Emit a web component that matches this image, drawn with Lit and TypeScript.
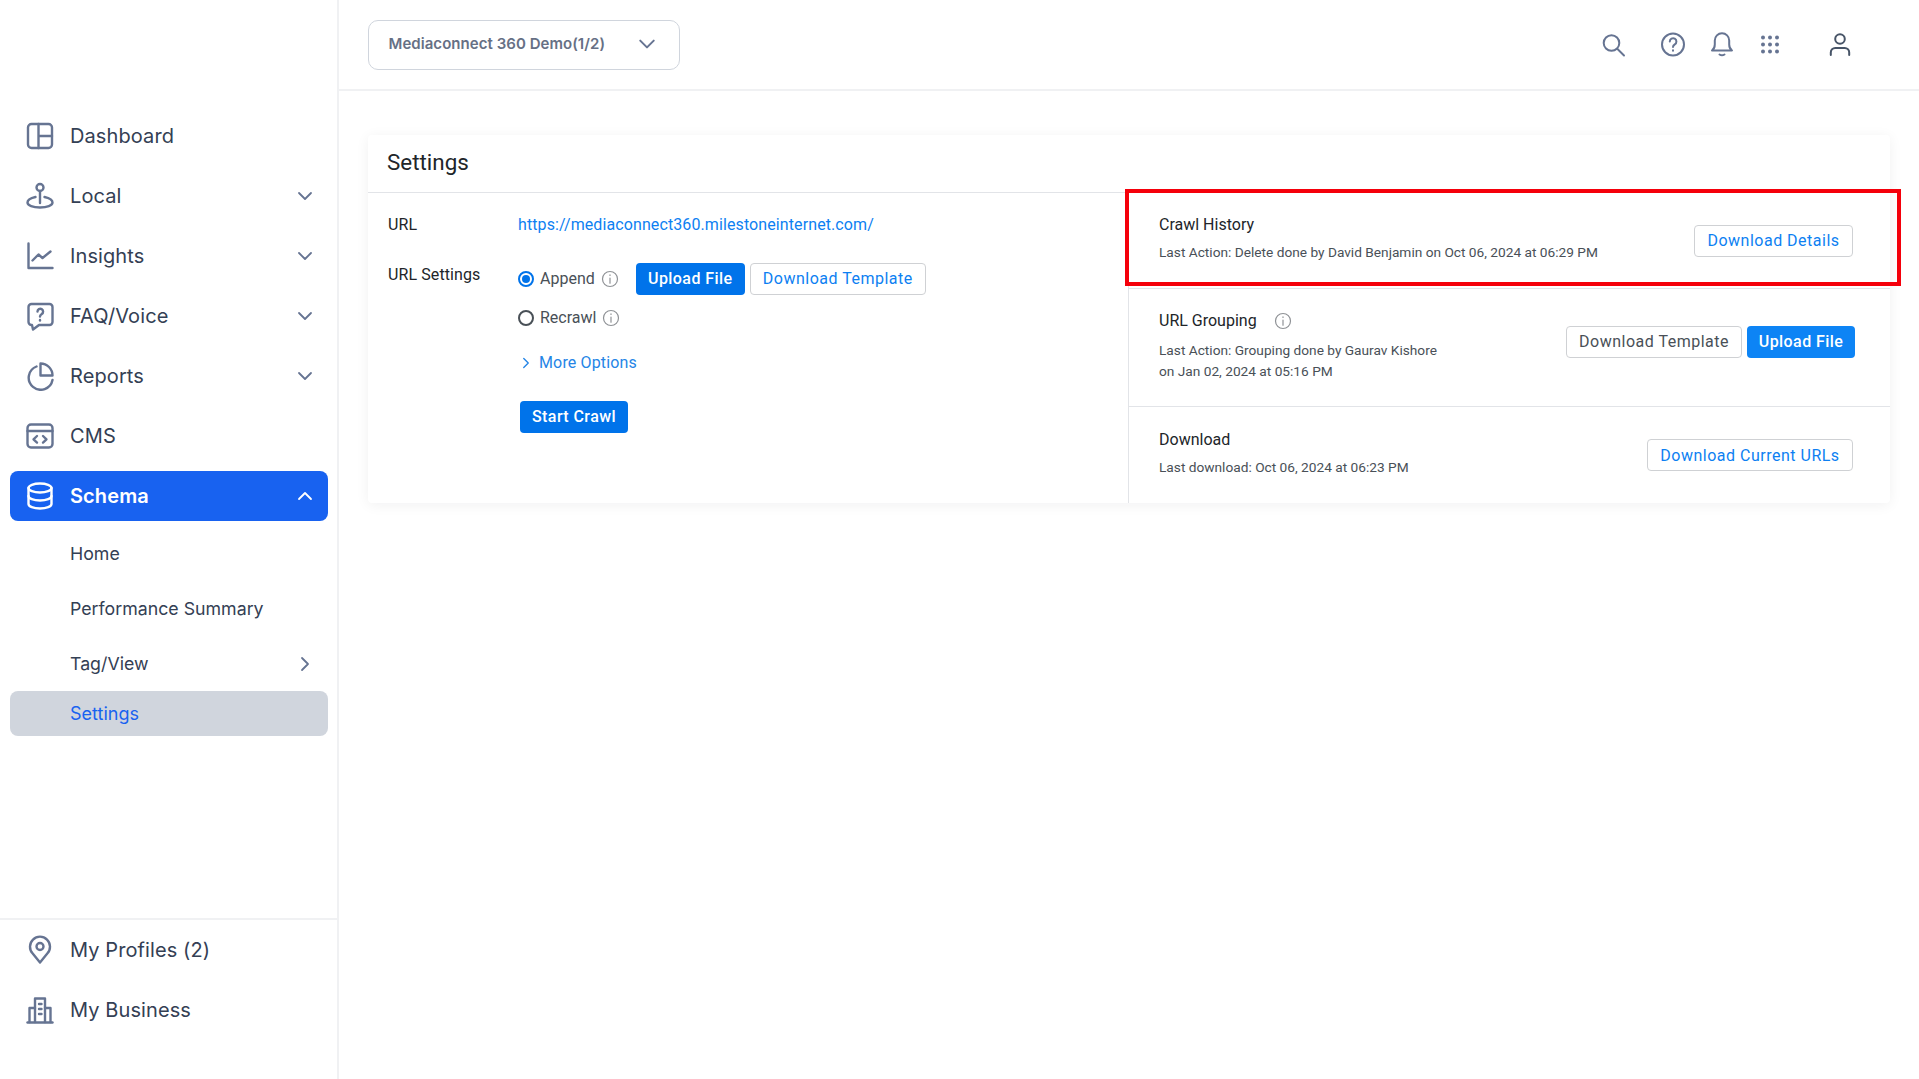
import { LitElement, html, css, svg } from 'lit';
import { customElement } from 'lit/decorators.js';

const icons: Record<string, unknown> = {
  dashboard: svg`<rect x="3" y="3" width="24" height="24" rx="3.5"/><path d="M13.5 3v24M13.5 15H27"/>`,
  local: svg`<circle cx="15" cy="6.500" r="3.500"/><path d="M15 10v12"/><path d="M10.500 16C6 17 2.500 18.800 2.500 21.500c0 3 5.500 5 12.500 5s12.500-2 12.500-5c0-2.700-3.500-4.500-8-5.500"/>`,
  insights: svg`<path d="M3.500 2.500V27H27.500"/><path d="M7.500 19.500l6-6 4 3.500 8-6.500"/>`,
  faq: svg`<path d="M6.500 3h18a3 3 0 0 1 3 3v15a3 3 0 0 1-3 3H14l-6 4.500-1-4.500h-.5a3 3 0 0 1-3-3V6a3 3 0 0 1 3-3z"/><path d="M12.500 10.500a2.800 2.800 0 1 1 4.300 2.400c-1.200.8-1.800 1.300-1.800 2.600"/><path d="M15 19v.5"/>`,
  reports: svg`<path d="M11.500 5.500A12 12 0 1 0 27.500 19"/><path d="M15.500 2.500a12 12 0 0 1 12 12h-12z"/>`,
  cms: svg`<rect x="2.500" y="3.500" width="25" height="23" rx="3.500"/><path d="M2.500 10h25"/><path d="M12 15l-3.500 3.300 3.500 3.300M18 15l3.500 3.300-3.500 3.300"/>`,
  schema: svg`<ellipse cx="15" cy="7" rx="11.500" ry="4.500"/><path d="M3.500 7v16c0 2.500 5 4.500 11.500 4.500s11.500-2 11.500-4.500V7"/><path d="M3.500 15c0 2.500 5 4.500 11.500 4.500s11.500-2 11.500-4.500"/>`,
  pin: svg`<path d="M15 27.500l-7.300-9a10 10 0 1 1 14.600 0z"/><circle cx="15" cy="11.500" r="3.500"/>`,
  business: svg`<path d="M2.500 27.500h25"/><path d="M10 27V3.500h10V27"/><path d="M10 13H4.500v14M20 13h5.500v14"/><path d="M14 9h2.500M14 14h2.500M14 19h2.500"/>`,
  search: svg`<circle cx="11.500" cy="11" r="7.800"/><path d="M17.500 17l6.500 6.500"/>`,
  help: svg`<circle cx="13" cy="12.500" r="11"/><path d="M9.800 9.500a3.300 3.300 0 1 1 5 2.900c-1.200.8-1.800 1.300-1.800 2.600"/><path d="M13 18.300v.4"/>`,
  bell: svg`<path d="M3 18.500c2-1.500 2.800-3.500 2.800-6V8.500a7.200 7.200 0 0 1 14.400 0v4c0 2.500.8 4.500 2.800 6z"/><path d="M10.500 22.500c1.500 1 3.500 1 5 0"/>`,
  user: svg`<circle cx="13" cy="7" r="4.800"/><path d="M3.800 23v-2.500a4.500 4.500 0 0 1 4.500-4.500h9.400a4.500 4.500 0 0 1 4.500 4.500V23"/>`,
};

const chevron = (dir: 'down' | 'up' | 'right') => {
  const d = dir === 'down' ? 'M2 5l6 6 6-6' : dir === 'up' ? 'M2 11l6-6 6 6' : 'M5 2l6 6-6 6';
  return html`<svg class="chev" viewBox="0 0 16 16"><path d=${d}/></svg>`;
};

const info = html`<svg class="info" viewBox="0 0 18 18"><circle cx="9" cy="9" r="7.500"/><path d="M9 8v5.200"/><path d="M9 4.800v.6"/></svg>`;

@customElement('app-root')
export class AppRoot extends LitElement {
  static styles = css`
    :host {
      display: block;
      height: 100vh;
      overflow: hidden;
      background: #fff;
    }
    .shell {
      display: flex;
      height: 1079px;
    }

    /* sidebar */
    .sidebar {
      width: 337px;
      flex: none;
      border-right: 2px solid #f0f1f3;
      display: flex;
      flex-direction: column;
      font-family: Inter, sans-serif;
      color: #344054;
    }
    .nav {
      flex: 1;
      padding: 111px 9px 0 10px;
      display: flex;
      flex-direction: column;
      gap: 10px;
    }
    .item {
      height: 50px;
      display: flex;
      align-items: center;
      padding: 0 15px;
      font-size: 20px;
      letter-spacing: 0.1px;
      border-radius: 8px;
    }
    .item .ico {
      width: 30px;
      height: 30px;
      margin-right: 15px;
      flex: none;
      fill: none;
      stroke: #667492;
      stroke-width: 2.4;
      stroke-linecap: round;
      stroke-linejoin: round;
    }
    .item .label {
      flex: 1;
    }
    .chev {
      width: 16px;
      height: 16px;
      fill: none;
      stroke: #667492;
      stroke-width: 1.8;
      stroke-linecap: round;
      stroke-linejoin: round;
    }
    .item.active {
      background: #1862f0;
      color: #fff;
      font-weight: 600;
    }
    .item.active .ico,
    .item.active .chev {
      stroke: #fff;
    }
    .sub {
      height: 45px;
      display: flex;
      align-items: center;
      justify-content: space-between;
      padding: 0 15px 0 60px;
      font-size: 17.750px;
    }
    .sub.current {
      margin-top: -5px;
      background: #d0d5dd;
      color: #1862f0;
      border-radius: 8px;
      font-size: 18px;
    }
    .foot {
      height: 154px;
      border-top: 2px solid #f0f1f3;
      padding: 5px 9px 0 10px;
      display: flex;
      flex-direction: column;
      gap: 10px;
    }

    /* main column */
    .main {
      flex: 1;
      min-width: 0;
      display: flex;
      flex-direction: column;
    }
    .top {
      height: 89px;
      flex: none;
      border-bottom: 2px solid #f0f1f3;
      display: flex;
      align-items: center;
      justify-content: space-between;
      padding: 0 66px 0 29px;
    }
    .picker {
      width: 312px;
      height: 50px;
      box-sizing: border-box;
      border: 1.5px solid #d0d5dd;
      border-radius: 10px;
      display: flex;
      align-items: center;
      justify-content: space-between;
      padding: 0 23px 2px 19.500px;
      font: 600 15px Inter, sans-serif;
      letter-spacing: 0.05px;
      color: #667085;
    }
    .picker .chev {
      width: 18px;
      height: 18px;
    }
    .tools {
      display: flex;
      align-items: center;
    }
    .tools svg {
      width: 26px;
      height: 26px;
      fill: none;
      stroke: #667492;
      stroke-width: 2;
      stroke-linecap: round;
      stroke-linejoin: round;
    }
    .tools .t-help { margin-left: 34px; }
    .tools .t-bell { margin-left: 23px; }
    .tools .t-grid { margin-left: 22px; fill: #667492; stroke: none; }
    .tools .t-user { margin-left: 44px; stroke: #475467; }

    /* settings card */
    .content {
      padding: 44px 29px 0 29px;
    }
    .card {
      background: #fff;
      border-radius: 4px;
      box-shadow: 0 2px 14px rgba(16, 24, 40, 0.06);
      font-family: Roboto, sans-serif;
      color: #212529;
    }
    .card-title {
      height: 58px;
      box-sizing: border-box;
      border-bottom: 1px solid #e2e4e8;
      padding: 0 19px 4px;
      display: flex;
      align-items: center;
      font-size: 22.400px;
    }
    .panes {
      display: flex;
      height: 310px;
    }
    .left {
      width: 761px;
      flex: none;
      box-sizing: border-box;
      border-right: 1px solid #e2e4e8;
      padding: 22px 0 0 20px;
      font-size: 16px;
    }
    .field {
      display: flex;
    }
    .field-label {
      width: 130px;
      flex: none;
      letter-spacing: 0.1px;
    }
    .link {
      color: #0d7ff2;
      letter-spacing: 0.1px;
    }
    .settings-row {
      margin-top: 31px;
    }
    .opts {
      display: flex;
      flex-direction: column;
      margin-top: -2.500px;
    }
    .opt {
      display: flex;
      align-items: center;
      height: 32px;
      color: #495057;
    }
    .opt + .opt {
      margin-top: 7px;
    }
    .radio {
      width: 16px;
      height: 16px;
      box-sizing: border-box;
      border: 2px solid #495057;
      border-radius: 50%;
      margin-right: 6px;
      position: relative;
    }
    .radio.on {
      border-color: #0073ea;
    }
    .radio.on::after {
      content: '';
      position: absolute;
      inset: 2px;
      border-radius: 50%;
      background: #0073ea;
    }
    .info {
      width: 18px;
      height: 18px;
      margin-left: 6px;
      fill: none;
      stroke: #8f9296;
      stroke-width: 1.2;
      stroke-linecap: round;
    }
    .btn {
      height: 32px;
      box-sizing: border-box;
      display: inline-flex;
      align-items: center;
      justify-content: center;
      border-radius: 4px;
      font-size: 16px;
      letter-spacing: 0.5px;
    }
    .btn.solid {
      background: #0073ea;
      color: #fff;
      font-weight: 500;
      letter-spacing: 0.42px;
    }
    .btn.line {
      background: #fff;
      border: 1px solid #cfd1d4;
      color: #0d7ff2;
    }
    .btn.dark {
      color: #495057;
    }
    .w109 { width: 109px; }
    .w176 { width: 176px; }
    .w108 { width: 108px; }
    .w158 { width: 159px; }
    .w205 { width: 206px; }
    .opt .btn.solid {
      margin-left: 17px;
    }
    .opt .btn.line {
      margin-left: 5px;
    }
    .more {
      display: flex;
      align-items: center;
      height: 20px;
      margin-top: 19px;
      color: #2585e6;
      letter-spacing: 0.15px;
    }
    .more .chev {
      width: 12px;
      height: 12px;
      stroke: #2585e6;
      margin: 0 7px 0 2px;
    }
    .start {
      margin: 28px 0 0 2px;
    }

    .right {
      flex: 1;
      min-width: 0;
      display: flex;
      flex-direction: column;
    }
    .row {
      display: flex;
      align-items: center;
      justify-content: space-between;
      box-sizing: border-box;
      padding: 0 37px 0 30px;
      border-bottom: 1px solid #e2e4e8;
      position: relative;
    }
    .row:last-child {
      border-bottom: none;
    }
    .row h3 {
      margin: 0 0 8px;
      font-size: 16px;
      font-weight: 400;
      display: flex;
      align-items: center;
    }
    .row h3 .info {
      margin-left: 17px;
    }
    .row p {
      margin: 0;
      font-size: 13.700px;
      line-height: 21px;
      color: #495057;
    }
    .r1 { height: 96px; }
    .r1 .text { margin-top: -4px; }
    .r2 { height: 118px; padding-right: 35px; }
    .r2 .text { margin-top: -2px; }
    .r2 h3 { margin-bottom: 10px; }
    .r3 { flex: 1; }
    .r3 .text { margin-top: -2px; }
    .r2 .btns {
      display: flex;
      gap: 5px;
      margin-top: -12px;
    }
    .r2 .btn.solid {
      background: #0d84f5;
    }
    .highlight {
      position: absolute;
      top: -4px;
      left: -4px;
      right: -11px;
      bottom: 2px;
      border: 4px solid #f5000b;
      pointer-events: none;
    }
  `;

  renderItem(icon: string, label: string, arrow?: 'down' | 'up', active = false) {
    return html`
      <div class="item ${active ? 'active' : ''}">
        <svg class="ico" viewBox="0 0 30 30">${icons[icon]}</svg>
        <span class="label">${label}</span>
        ${arrow ? chevron(arrow) : ''}
      </div>
    `;
  }

  render() {
    const dots = [5.5, 12.5, 19.5].flatMap((y) =>
      [6, 13, 20].map((x) => svg`<circle cx=${x} cy=${y} r="2"/>`)
    );
    return html`
      <div class="shell">
        <aside class="sidebar">
          <nav class="nav">
            ${this.renderItem('dashboard', 'Dashboard')}
            ${this.renderItem('local', 'Local', 'down')}
            ${this.renderItem('insights', 'Insights', 'down')}
            ${this.renderItem('faq', 'FAQ/Voice', 'down')}
            ${this.renderItem('reports', 'Reports', 'down')}
            ${this.renderItem('cms', 'CMS')}
            ${this.renderItem('schema', 'Schema', 'up', true)}
            <div class="sub">Home</div>
            <div class="sub">Performance Summary</div>
            <div class="sub">Tag/View ${chevron('right')}</div>
            <div class="sub current">Settings</div>
          </nav>
          <div class="foot">
            ${this.renderItem('pin', 'My Profiles (2)')}
            ${this.renderItem('business', 'My Business')}
          </div>
        </aside>

        <div class="main">
          <header class="top">
            <div class="picker">Mediaconnect 360 Demo(1/2) ${chevron('down')}</div>
            <div class="tools">
              <svg viewBox="0 0 26 26">${icons.search}</svg>
              <svg class="t-help" viewBox="0 0 26 26">${icons.help}</svg>
              <svg class="t-bell" viewBox="0 0 26 26">${icons.bell}</svg>
              <svg class="t-grid" viewBox="0 0 26 26">${dots}</svg>
              <svg class="t-user" viewBox="0 0 26 26">${icons.user}</svg>
            </div>
          </header>

          <div class="content">
            <section class="card">
              <div class="card-title">Settings</div>
              <div class="panes">
                <div class="left">
                  <div class="field">
                    <div class="field-label">URL</div>
                    <div class="link">https://mediaconnect360.milestoneinternet.com/</div>
                  </div>
                  <div class="field settings-row">
                    <div class="field-label">URL Settings</div>
                    <div class="opts">
                      <div class="opt">
                        <span class="radio on"></span>Append ${info}
                        <span class="btn solid w109">Upload File</span>
                        <span class="btn line w176">Download Template</span>
                      </div>
                      <div class="opt"><span class="radio"></span>Recrawl ${info}</div>
                      <div class="more">${chevron('right')}More Options</div>
                      <div class="start"><span class="btn solid w108">Start Crawl</span></div>
                    </div>
                  </div>
                </div>
                <div class="right">
                  <div class="row r1">
                    <div class="text">
                      <h3>Crawl History</h3>
                      <p>Last Action: Delete done by David Benjamin on Oct 06, 2024 at 06:29 PM</p>
                    </div>
                    <span class="btn line w158">Download Details</span>
                    <div class="highlight"></div>
                  </div>
                  <div class="row r2">
                    <div class="text">
                      <h3>URL Grouping ${info}</h3>
                      <p>Last Action: Grouping done by Gaurav Kishore<br />on Jan 02, 2024 at 05:16 PM</p>
                    </div>
                    <div class="btns">
                      <span class="btn line dark w176">Download Template</span>
                      <span class="btn solid w108">Upload File</span>
                    </div>
                  </div>
                  <div class="row r3">
                    <div class="text">
                      <h3>Download</h3>
                      <p>Last download: Oct 06, 2024 at 06:23 PM</p>
                    </div>
                    <span class="btn line w205">Download Current URLs</span>
                  </div>
                </div>
              </div>
            </section>
          </div>
        </div>
      </div>
    `;
  }
}
